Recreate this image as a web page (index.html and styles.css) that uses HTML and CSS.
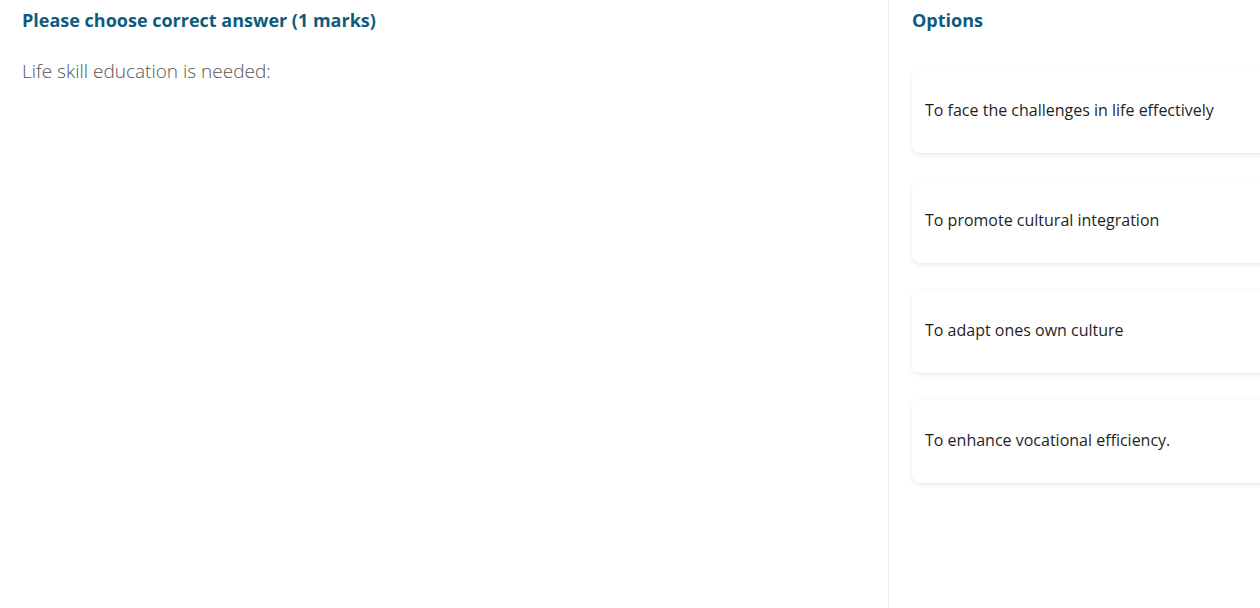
FILE: index.html
```html
<!DOCTYPE html>
<html>
<head>
<meta charset="utf-8">
<link rel="stylesheet" href="styles.css">
</head>
<body>
<div class="page">
  <section class="question">
    <h2 class="heading">Please choose correct answer (1 marks)</h2>
    <p class="question-text">Life skill education is needed:</p>
  </section>
  <section class="options">
    <h2 class="heading">Options</h2>
    <div class="option-list">
      <div class="option">To face the challenges in life effectively</div>
      <div class="option">To promote cultural integration</div>
      <div class="option">To adapt ones own culture</div>
      <div class="option">To enhance vocational efficiency.</div>
    </div>
  </section>
</div>
</body>
</html>
```

FILE: styles.css
```css
html, body {
  margin: 0;
  padding: 0;
  background: #ffffff;
  font-family: "Open Sans", "Noto Sans", sans-serif;
}
.page {
  display: flex;
  width: 1260px;
  height: 608px;
  overflow: hidden;
}
.question {
  width: 889px;
  flex: none;
  box-sizing: border-box;
  padding: 8px 22px;
  border-right: 1px solid #ececec;
}
.heading {
  margin: 0;
  font-size: 18px;
  line-height: 24px;
  font-weight: 700;
  color: #0d5c80;
}
.question-text {
  margin: 27px 0 0;
  font-size: 19px;
  line-height: 24px;
  font-weight: 300;
  color: #555;
}
.options {
  flex: none;
  width: 400px;
  box-sizing: border-box;
  padding: 8px 0 0 23px;
}
.option-list {
  display: flex;
  flex-direction: column;
  gap: 27px;
  margin-top: 38px;
}
.option {
  height: 83px;
  box-sizing: border-box;
  padding: 0 13px 3px;
  display: flex;
  align-items: center;
  background: #fff;
  border-radius: 8px;
  box-shadow: 0 2px 5px rgba(0,0,0,0.08), 0 0 2px rgba(0,0,0,0.04);
  font-size: 16px;
  color: #1f1f1f;
}
```
